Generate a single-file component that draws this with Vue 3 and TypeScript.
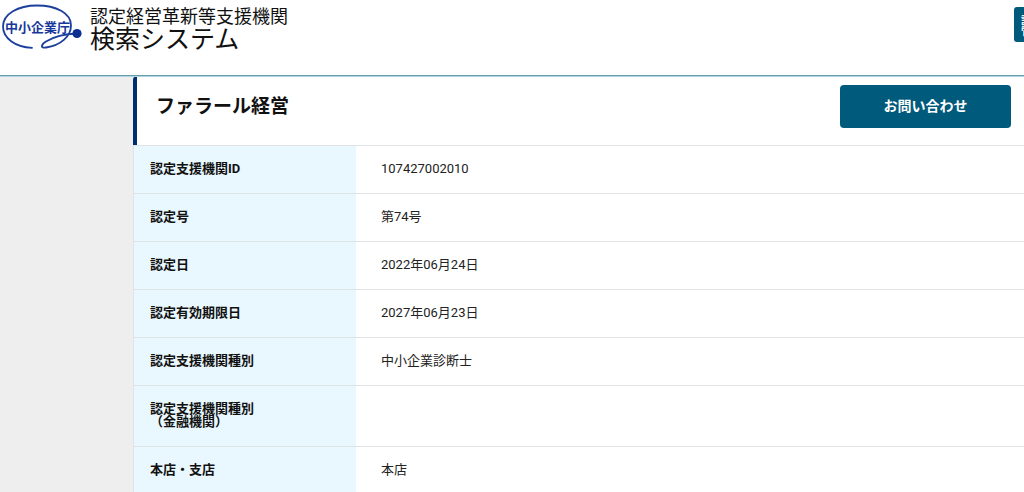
<script setup lang="ts">
interface Row {
  label: string[]
  value: string
}

const rows: Row[] = [
  { label: ['認定支援機関ID'], value: '107427002010' },
  { label: ['認定号'], value: '第74号' },
  { label: ['認定日'], value: '2022年06月24日' },
  { label: ['認定有効期限日'], value: '2027年06月23日' },
  { label: ['認定支援機関種別'], value: '中小企業診断士' },
  { label: ['認定支援機関種別', '（金融機関）'], value: '' },
  { label: ['本店・支店'], value: '本店' },
]
</script>

<template>
  <div class="page">
    <header class="header">
      <a class="brand" href="#">
        <svg class="logo" viewBox="0 0 84 52" role="img" aria-label="中小企業庁">
          <path
            d="M32 47.8C15 47 3 38 3 26.500C3 14 18 5.500 37 5.500C56 5.500 71 13 71 25.500C71 36 61 45.500 46 47.500C40 48.500 41 44.500 46 41.500C54 36.500 64 34 77 33.500"
            fill="none"
            stroke="#1c3f9c"
            stroke-width="1.800"
            stroke-linecap="round"
          />
          <circle cx="77" cy="33.500" r="4.600" fill="#0d2f92" />
          <text x="5" y="32" class="logo-text">中小企業庁</text>
        </svg>
        <span class="brand-name">
          <span class="brand-top">認定経営革新等支援機関</span>
          <span class="brand-main">検索システム</span>
        </span>
      </a>
      <nav class="side-menu">
        <button type="button" class="menu-button">
          <span class="line">認</span>
          <span class="line">管</span>
        </button>
      </nav>
    </header>

    <main class="content">
      <section class="card">
        <div class="card-head">
          <h1>ファラール経営</h1>
          <button type="button" class="contact">お問い合わせ</button>
        </div>
        <table class="details">
          <tbody>
            <tr v-for="(row, i) in rows" :key="i">
              <th scope="row">
                <span v-for="line in row.label" :key="line" class="line">{{ line }}</span>
              </th>
              <td>{{ row.value }}</td>
            </tr>
          </tbody>
        </table>
      </section>
    </main>
  </div>
</template>

<style>
html,
body {
  margin: 0;
  height: 100%;
}
body {
  overflow: hidden;
  background: #eee;
}
</style>

<style scoped>
.page {
  font-family: Roboto, 'Noto Sans CJK JP', sans-serif;
  font-size: 13px;
  line-height: 13px;
  color: #222;
}
.header {
  position: relative;
  display: flex;
  justify-content: space-between;
  align-items: flex-start;
  height: 75px;
  background: #fff;
  border-bottom: 1px solid #659cac;
  box-shadow: 0 1px 0 #b5d6de;
  overflow: hidden;
}
.brand {
  display: flex;
  gap: 6px;
  color: #111;
  text-decoration: none;
}
.logo {
  width: 84px;
  height: 52px;
}
.logo-text {
  font-family: 'Noto Sans CJK JP', sans-serif;
  font-size: 13px;
  font-weight: 700;
  fill: #17379b;
}
.brand-name {
  display: flex;
  flex-direction: column;
  padding-top: 7px;
}
.brand-top {
  font-size: 18px;
  line-height: 20px;
}
.brand-main {
  font-size: 25px;
  line-height: 26px;
}
.side-menu {
  width: 10px;
  padding-top: 7px;
}
.menu-button {
  width: 160px;
  height: 35px;
  padding: 0 7px;
  border: 0;
  border-radius: 3px;
  background: #005a7c;
  color: #fff;
  font: 700 10px/11px 'Noto Sans CJK JP', sans-serif;
  text-align: left;
}
.content {
  padding-left: 133px;
}
.card {
  background: #fff;
}
.card-head {
  display: flex;
  justify-content: space-between;
  align-items: flex-start;
  box-sizing: border-box;
  height: 69px;
  padding: 9px 13px 0 19px;
  border-left: 4px solid #002f70;
  border-top-left-radius: 4px;
}
h1 {
  margin: 0;
  font-size: 19px;
  font-weight: 700;
  line-height: 44px;
  color: #111;
}
.contact {
  width: 171px;
  height: 43px;
  padding: 0 0 4px;
  border: 0;
  border-radius: 4px;
  background: #005a7c;
  color: #fff;
  font: 700 14px/20px 'Noto Sans CJK JP', sans-serif;
}
.details {
  width: 100%;
  border-spacing: 0;
  border-left: 1px solid #dfe3e5;
}
th,
td {
  padding: 16px 25px 18px;
  border-top: 1px solid #dfe3e5;
  font-weight: 400;
  text-align: left;
  vertical-align: top;
}
th {
  box-sizing: border-box;
  width: 222px;
  padding: 16px 16px 18px;
  background: #e9f7fe;
  color: #111;
  font-weight: 700;
}
.line {
  display: block;
}
</style>
